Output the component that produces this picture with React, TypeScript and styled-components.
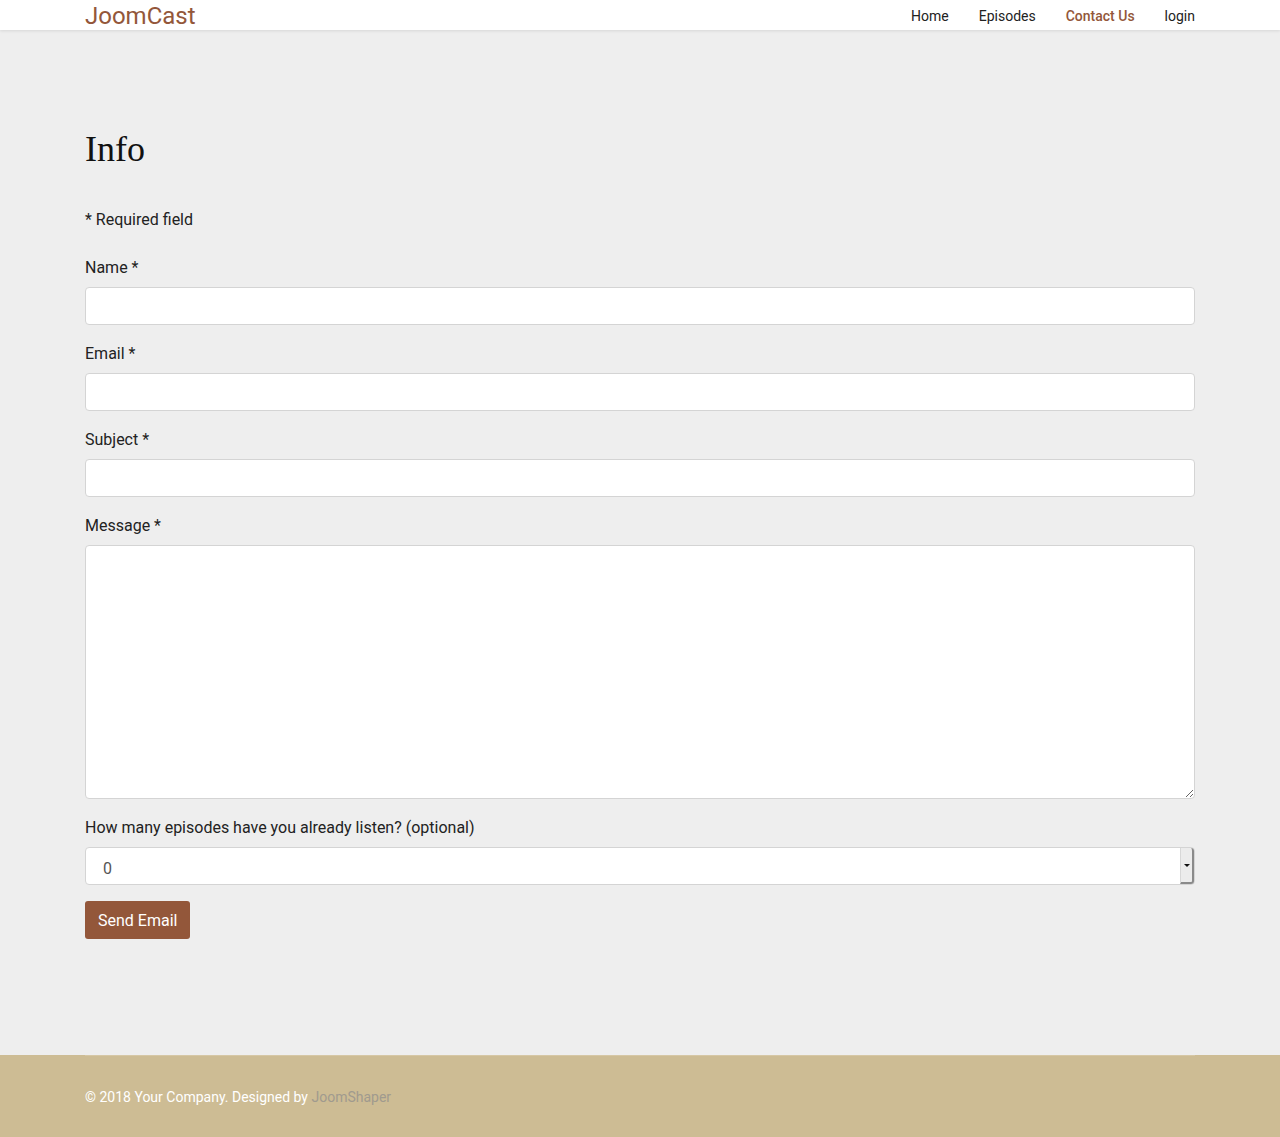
import React from "react";
import styled, { createGlobalStyle } from "styled-components";

const Global = createGlobalStyle`
  html, body { margin: 0; padding: 0; }
  body {
    background: #eeeeee;
    font-family: Roboto, "Liberation Sans", Arial, sans-serif;
    color: #222;
  }
  * { box-sizing: border-box; }
`;

const Header = styled.header`
  height: 30px;
  background: #fff;
  box-shadow: 0 1px 3px rgba(0, 0, 0, 0.1);
  position: relative;
  z-index: 2;
`;

const Container = styled.div`
  width: 1110px;
  margin: 0 auto;
`;

const HeaderInner = styled(Container)`
  display: flex;
  align-items: center;
  justify-content: space-between;
  height: 30px;
`;

const Brand = styled.a`
  font-family: Roboto, "Liberation Sans", sans-serif;
  font-size: 24px;
  line-height: 30px;
  color: #93573a;
  text-decoration: none;
  position: relative;
  top: 1px;
`;

const Nav = styled.nav`
  display: flex;
  gap: 30px;
`;

const NavLink = styled.a<{ $active?: boolean }>`
  font-size: 14px;
  line-height: 30px;
  font-weight: ${(p) => (p.$active ? 500 : 400)};
  color: ${(p) => (p.$active ? "#93573a" : "#222")};
  text-decoration: none;
  position: relative;
  top: 1px;
`;

const Main = styled.main`
  padding: 98px 0 116px;
`;

const Title = styled.h2`
  font-family: "Liberation Serif", "DejaVu Serif", serif;
  font-weight: 400;
  font-size: 36px;
  line-height: 43px;
  margin: 0 0 37px;
  color: #111;
`;

const Note = styled.p`
  font-size: 16px;
  line-height: 24px;
  margin: 0 0 23px;
`;

const Form = styled.form`
  display: flex;
  flex-direction: column;
`;

const Group = styled.div`
  display: flex;
  flex-direction: column;
  margin-bottom: 16px;
`;

const Label = styled.label`
  font-size: 16px;
  line-height: 24px;
  padding-top: 1px;
  margin-bottom: 7px;
  color: #222;
`;

const fieldCss = `
  width: 100%;
  background: #fff;
  border: 1px solid #d4d4d4;
  border-radius: 4px;
  font-family: Roboto, "Liberation Sans", sans-serif;
  font-size: 16px;
  color: #555;
  outline: none;
`;

const Input = styled.input`
  ${fieldCss}
  height: 38px;
  padding: 6px 12px;
`;

const TextArea = styled.textarea`
  ${fieldCss}
  height: 254px;
  padding: 6px 12px;
  resize: vertical;
  display: block;
`;

const SelectWrap = styled.div`
  position: relative;
`;

const Select = styled.select`
  ${fieldCss}
  height: 38px;
  padding: 4px 17px 0;
  appearance: none;
  -webkit-appearance: none;
`;

const Arrow = styled.span`
  position: absolute;
  right: 1px;
  top: 1px;
  bottom: 1px;
  width: 14px;
  background: #ececec;
  border-left: 1px solid #d8d8d8;
  border-right: 2px solid #8a8a8a;
  border-bottom: 2px solid #8a8a8a;
  border-radius: 0 3px 3px 0;
  pointer-events: none;
  display: flex;
  align-items: center;
  justify-content: center;
  &::after {
    content: "";
    border-left: 3px solid transparent;
    border-right: 3px solid transparent;
    border-top: 3px solid #111;
  }
`;

const Button = styled.button`
  align-self: flex-start;
  height: 38px;
  padding: 0 13px;
  background: #93573a;
  color: #fff;
  border: none;
  border-radius: 3px;
  font-family: Roboto, "Liberation Sans", sans-serif;
  font-size: 16px;
  cursor: pointer;
`;

const Footer = styled.footer`
  background: #cdbc94;
`;

const FooterInner = styled(Container)`
  border-top: 1px solid #d6c7a5;
  padding: 29px 0 28px;
  font-size: 14px;
  line-height: 24px;
  color: #fff;
`;

const FooterLink = styled.a`
  color: #a09a8e;
  text-decoration: none;
`;

export default function App() {
  return (
    <>
      <Global />
      <Header>
        <HeaderInner>
          <Brand href="#">JoomCast</Brand>
          <Nav>
            <NavLink href="#">Home</NavLink>
            <NavLink href="#">Episodes</NavLink>
            <NavLink href="#" $active>
              Contact Us
            </NavLink>
            <NavLink href="#">login</NavLink>
          </Nav>
        </HeaderInner>
      </Header>
      <Main>
        <Container>
          <Title>Info</Title>
          <Note>* Required field</Note>
          <Form onSubmit={(e) => e.preventDefault()}>
            <Group>
              <Label>Name *</Label>
              <Input type="text" />
            </Group>
            <Group>
              <Label>Email *</Label>
              <Input type="email" />
            </Group>
            <Group>
              <Label>Subject *</Label>
              <Input type="text" />
            </Group>
            <Group>
              <Label>Message *</Label>
              <TextArea />
            </Group>
            <Group>
              <Label>How many episodes have you already listen? (optional)</Label>
              <SelectWrap>
                <Select defaultValue="0">
                  <option value="0">0</option>
                  <option value="1">1</option>
                  <option value="2">2</option>
                </Select>
                <Arrow />
              </SelectWrap>
            </Group>
            <Button type="submit">Send Email</Button>
          </Form>
        </Container>
      </Main>
      <Footer>
        <FooterInner>
          © 2018 Your Company. Designed by <FooterLink href="#">JoomShaper</FooterLink>
        </FooterInner>
      </Footer>
    </>
  );
}
